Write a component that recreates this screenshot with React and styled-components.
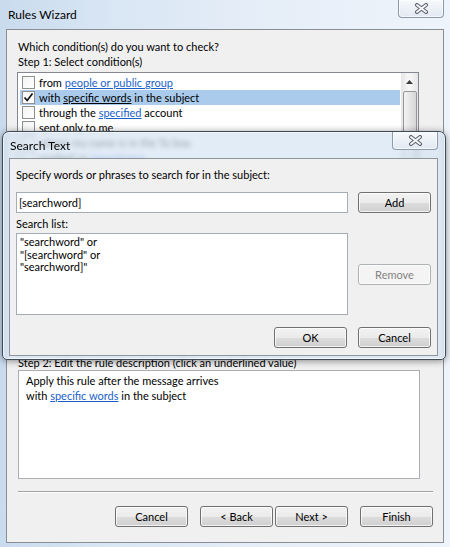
import React from 'react';
import styled, { createGlobalStyle } from 'styled-components';

const GlobalStyle = createGlobalStyle`
  html, body {
    margin: 0;
    padding: 0;
    background: #ffffff;
  }
  body {
    font-family: Lato, "Noto Sans", sans-serif;
    font-size: 11px;
    color: #000000;
  }
`;

// only the first rows show; the rest of the list sits under the dialog
const conditions = [
  { before: 'from ', link: 'people or public group', after: '' },
  { before: 'with ', link: 'specific words', after: ' in the subject', checked: true, selected: true },
  { before: 'through the ', link: 'specified', after: ' account' },
  { before: 'sent only to me' },
  { before: 'where my name is in the To box' },
  { before: 'marked as ', link: 'importance', after: '' },
];

const searchList = ['"searchword" or', '"[searchword" or', '"searchword]"'];

function CloseGlyph() {
  return (
    <svg width="15" height="11" viewBox="0 0 15 11">
      <path d="M3 2 L12 9 M12 2 L3 9" stroke="#5b6069" strokeWidth="4" strokeLinecap="round" fill="none" />
      <path d="M3 2 L12 9 M12 2 L3 9" stroke="#f4f6f9" strokeWidth="2" strokeLinecap="round" fill="none" />
    </svg>
  );
}

function CheckMark() {
  return (
    <svg width="11" height="11" viewBox="0 0 11 11">
      <path d="M1.5 5.5 L4.2 8.5 L9.5 1.5" stroke="#111" strokeWidth="1.7" fill="none" />
    </svg>
  );
}

function Condition({ item }) {
  return (
    <Row $selected={item.selected}>
      <CheckBox>{item.checked && <CheckMark />}</CheckBox>
      <span>
        {item.before}
        {item.link && <Link $plain={item.selected}>{item.link}</Link>}
        {item.after}
      </span>
    </Row>
  );
}

function App() {
  return (
    <>
      <GlobalStyle />
      <Window>
        <TitleBar>
          <Title>Rules Wizard</Title>
          <CloseButton>
            <CloseGlyph />
          </CloseButton>
        </TitleBar>
        <Client>
          <Text>Which condition(s) do you want to check?</Text>
          <Text>Step 1: Select condition(s)</Text>
          <ConditionList>
            <Rows>
              {conditions.map((item, index) => (
                <Condition key={index} item={item} />
              ))}
            </Rows>
            <ScrollBar>
              <ArrowButton>
                <svg width="7" height="4" viewBox="0 0 7 4">
                  <path d="M0 4 L3.5 0 L7 4 Z" fill="#3c3c3c" />
                </svg>
              </ArrowButton>
              <Thumb />
            </ScrollBar>
          </ConditionList>
          <Text $top={4}>Step 2: Edit the rule description (click an underlined value)</Text>
          <DescriptionBox>
            <div>Apply this rule after the message arrives</div>
            <div>
              with <Link>specific words</Link> in the subject
            </div>
          </DescriptionBox>
          <Separator />
          <ButtonRow>
            <Button>Cancel</Button>
            <ButtonPair>
              <Button>&lt; Back</Button>
              <Button>Next &gt;</Button>
            </ButtonPair>
            <Button>Finish</Button>
          </ButtonRow>
        </Client>

        <Dialog>
          <DialogTitleBar>
            <DialogTitle>Search Text</DialogTitle>
            <CloseButton>
              <CloseGlyph />
            </CloseButton>
          </DialogTitleBar>
          <DialogBody>
            <FullRow>Specify words or phrases to search for in the subject:</FullRow>
            <TextInput>[searchword]</TextInput>
            <Button>Add</Button>
            <FullRow $top={3}>Search list:</FullRow>
            <SearchListBox>
              {searchList.map((line, index) => (
                <div key={index}>{line}</div>
              ))}
            </SearchListBox>
            <Button disabled $center>Remove</Button>
            <DialogFooter>
              <Button>OK</Button>
              <Button>Cancel</Button>
            </DialogFooter>
          </DialogBody>
        </Dialog>
      </Window>
    </>
  );
}

export default App;

const Window = styled.div`
  position: relative;
  width: 450px;
  height: 547px;
  display: flex;
  flex-direction: column;
  overflow: hidden;
  background: linear-gradient(90deg, #c9dbee 0%, #d9e6f4 25%, #e6eef8 60%, #eef4fb 100%);
`;

const TitleBar = styled.div`
  height: 29px;
  flex-shrink: 0;
  display: flex;
  justify-content: space-between;
  align-items: flex-start;
  padding-right: 6px;
`;

const Title = styled.div`
  padding: 7px 0 0 8px;
  line-height: 15px;
  font-size: 12px;
`;

const CloseButton = styled.div`
  width: 46px;
  height: 18px;
  box-sizing: border-box;
  border: 1px solid #8c9aac;
  border-top: none;
  border-radius: 0 0 4px 4px;
  background: linear-gradient(#f6f9fc, #e2e9f2);
  box-shadow: inset 0 0 0 1px rgba(255, 255, 255, 0.6);
  display: flex;
  align-items: center;
  justify-content: center;
`;

const Client = styled.div`
  flex: 1;
  margin: 0 6px 4px 6px;
  border: 1px solid #8a8d91;
  background: #f0f0f0;
  padding: 9px 10px 0 10px;
  display: flex;
  flex-direction: column;
`;

const Text = styled.div`
  line-height: 15px;
  margin-left: 1px;
  margin-top: ${(p) => p.$top || 0}px;
  white-space: nowrap;
`;

const ConditionList = styled.div`
  width: 402px;
  height: 279px;
  box-sizing: border-box;
  margin-top: 3px;
  border: 1px solid #828790;
  background: #ffffff;
  display: flex;
  flex-shrink: 0;
  overflow: hidden;
`;

const Rows = styled.div`
  flex: 1;
  padding: 2px 1px 0 2px;
  overflow: hidden;
`;

const Row = styled.div`
  height: 15px;
  display: flex;
  align-items: center;
  gap: 4px;
  padding-left: 2px;
  white-space: nowrap;
  background: ${(p) => (p.$selected ? '#aacbec' : 'transparent')};
`;

const CheckBox = styled.div`
  width: 13px;
  height: 13px;
  box-sizing: border-box;
  border: 1px solid #8e8f8f;
  background: linear-gradient(135deg, #f4f4f4, #ffffff);
  display: flex;
  align-items: center;
  justify-content: center;
  flex-shrink: 0;
`;

const Link = styled.span`
  color: ${(p) => (p.$plain ? '#000000' : '#1a5fc8')};
  text-decoration: underline;
`;

const ScrollBar = styled.div`
  width: 17px;
  flex-shrink: 0;
  display: flex;
  flex-direction: column;
  align-items: center;
  background: linear-gradient(90deg, #e6e6e6, #f5f5f5 40%, #f5f5f5 60%, #e6e6e6);
`;

const ArrowButton = styled.div`
  width: 17px;
  height: 17px;
  display: flex;
  align-items: center;
  justify-content: center;
`;

const Thumb = styled.div`
  width: 14px;
  height: 130px;
  margin-top: 1px;
  box-sizing: border-box;
  border: 1px solid #979797;
  border-radius: 2px;
  background: linear-gradient(90deg, #f2f2f2, #e6e6e6 50%, #d6d6d6);
`;

const DescriptionBox = styled.div`
  width: 402px;
  height: 109px;
  box-sizing: border-box;
  margin-left: 1px;
  border: 1px solid #abadb3;
  background: #ffffff;
  padding: 2px 0 0 7px;
  line-height: 15px;
  flex-shrink: 0;
`;

const Separator = styled.div`
  margin: 12px 0 0 1px;
  height: 1px;
  width: 415px;
  background: #a0a0a0;
  border-bottom: 1px solid #ffffff;
`;

const ButtonRow = styled.div`
  margin-top: 13px;
  display: flex;
  justify-content: flex-end;
  gap: 12px;
  width: 416px;
`;

const ButtonPair = styled.div`
  display: flex;
  gap: 2px;
`;

const Button = styled.button`
  width: 73px;
  height: 21px;
  box-sizing: border-box;
  padding: 0;
  border: 1px solid ${(p) => (p.disabled ? '#adb2b5' : '#707070')};
  border-radius: 3px;
  background: ${(p) =>
    p.disabled ? '#f4f4f4' : 'linear-gradient(#f2f2f2 0%, #ebebeb 50%, #dddddd 51%, #cfcfcf 100%)'};
  box-shadow: inset 0 0 0 1px rgba(255, 255, 255, 0.75);
  font-family: Lato, "Noto Sans", sans-serif;
  font-size: 11px;
  color: ${(p) => (p.disabled ? '#838383' : '#000000')};
  align-self: ${(p) => (p.$center ? 'center' : 'start')};
`;

const Dialog = styled.div`
  position: absolute;
  left: 2px;
  top: 131px;
  width: 444px;
  height: 229px;
  box-sizing: border-box;
  border: 1px solid #3f4a57;
  border-radius: 7px 7px 5px 5px;
  background: rgba(214, 228, 244, 0.7);
  backdrop-filter: blur(2.5px);
  box-shadow: 0 1px 7px rgba(0, 0, 0, 0.45), inset 0 0 0 1px rgba(255, 255, 255, 0.6);
  display: flex;
  flex-direction: column;
`;

const DialogTitleBar = styled.div`
  height: 26px;
  flex-shrink: 0;
  display: flex;
  justify-content: space-between;
  align-items: flex-start;
  padding-right: 7px;
`;

const DialogTitle = styled.div`
  padding: 6px 0 0 7px;
  line-height: 15px;
  font-size: 12px;
`;

const DialogBody = styled.div`
  flex: 1;
  margin: 0 7px 3px 6px;
  border: 1px solid #8e959c;
  background: #f0f0f0;
  padding: 8px 5px 0 6px;
  display: grid;
  grid-template-columns: 332px 73px;
  column-gap: 10px;
  align-content: start;
`;

const FullRow = styled.div`
  grid-column: 1 / -1;
  line-height: 15px;
  margin-top: ${(p) => p.$top || 0}px;
  margin-bottom: ${(p) => (p.$top ? 2 : 10)}px;
`;

const TextInput = styled.div`
  height: 21px;
  box-sizing: border-box;
  border: 1px solid #a5acb5;
  background: #ffffff;
  padding-left: 2px;
  line-height: 19px;
`;

const SearchListBox = styled.div`
  height: 82px;
  box-sizing: border-box;
  border: 1px solid #a5acb5;
  background: #ffffff;
  padding: 2px 0 0 3px;
  line-height: 12.5px;
`;

const DialogFooter = styled.div`
  grid-column: 1 / -1;
  margin-top: 12px;
  display: flex;
  justify-content: flex-end;
  gap: 11px;
`;
